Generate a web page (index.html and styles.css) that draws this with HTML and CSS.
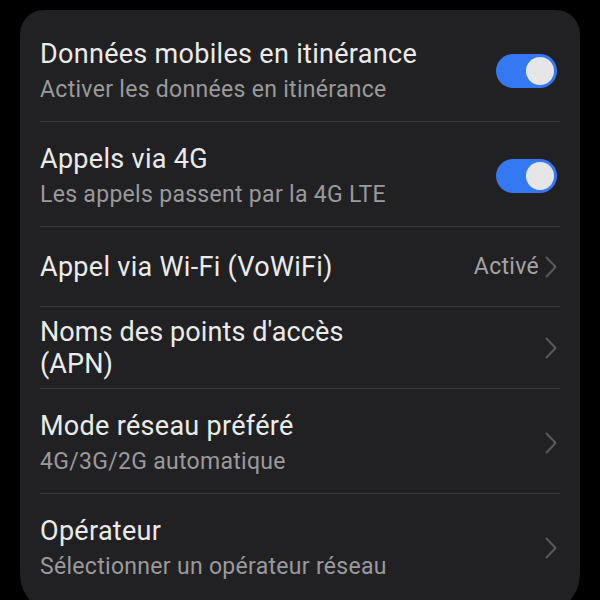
FILE: index.html
```html
<!DOCTYPE html>
<html lang="fr">
<head>
<meta charset="utf-8">
<link rel="stylesheet" href="styles.css">
</head>
<body>
<div class="card">
  <div class="row two">
    <div class="text">
      <div class="title">Données mobiles en itinérance</div>
      <div class="sub">Activer les données en itinérance</div>
    </div>
    <div class="toggle"><span class="knob"></span></div>
  </div>
  <div class="row two">
    <div class="text">
      <div class="title">Appels via 4G</div>
      <div class="sub">Les appels passent par la 4G LTE</div>
    </div>
    <div class="toggle"><span class="knob"></span></div>
  </div>
  <div class="row one">
    <div class="text">
      <div class="title">Appel via Wi-Fi (VoWiFi)</div>
    </div>
    <div class="end">
      <span class="value">Activé</span>
      <svg class="chev" width="12" height="22" viewBox="0 0 12 22"><path d="M1.5 1.5 L10.5 11 L1.5 20.5" fill="none" stroke="#5a5a5c" stroke-width="2" stroke-linecap="round" stroke-linejoin="round"/></svg>
    </div>
  </div>
  <div class="row wrap">
    <div class="text">
      <div class="title multi">Noms des points d'accès<br>(APN)</div>
    </div>
    <div class="end">
      <svg class="chev" width="12" height="22" viewBox="0 0 12 22"><path d="M1.5 1.5 L10.5 11 L1.5 20.5" fill="none" stroke="#5a5a5c" stroke-width="2" stroke-linecap="round" stroke-linejoin="round"/></svg>
    </div>
  </div>
  <div class="row two">
    <div class="text">
      <div class="title">Mode réseau préféré</div>
      <div class="sub">4G/3G/2G automatique</div>
    </div>
    <div class="end">
      <svg class="chev" width="12" height="22" viewBox="0 0 12 22"><path d="M1.5 1.5 L10.5 11 L1.5 20.5" fill="none" stroke="#5a5a5c" stroke-width="2" stroke-linecap="round" stroke-linejoin="round"/></svg>
    </div>
  </div>
  <div class="row two">
    <div class="text">
      <div class="title">Opérateur</div>
      <div class="sub">Sélectionner un opérateur réseau</div>
    </div>
    <div class="end">
      <svg class="chev" width="12" height="22" viewBox="0 0 12 22"><path d="M1.5 1.5 L10.5 11 L1.5 20.5" fill="none" stroke="#5a5a5c" stroke-width="2" stroke-linecap="round" stroke-linejoin="round"/></svg>
    </div>
  </div>
</div>
</body>
</html>
```
FILE: styles.css
```css
html, body {
  margin: 0;
  padding: 0;
  background: #000;
  height: 600px;
  overflow: hidden;
}
body {
  font-family: Roboto, "Noto Sans", "Liberation Sans", sans-serif;
}
.card {
  margin: 10px 20px 0;
  background: #212123;
  border-radius: 24px 24px 40px 40px;
  padding: 7px 20px 16px;
}
.row {
  display: flex;
  align-items: center;
  justify-content: space-between;
  border-top: 1px solid #3a3a3c;
}
.row:first-child {
  border-top: none;
}
.row.two {
  padding: 20px 0 16px;
}
.row.one {
  padding: 23px 0 22px;
}
.row.wrap {
  padding: 9px 0 8px;
}
.text {
  display: flex;
  flex-direction: column;
}
.title {
  color: #ebebeb;
  font-size: 27px;
  letter-spacing: 0.3px;
  line-height: 34px;
}
.title.multi {
  line-height: 32px;
  letter-spacing: 0.1px;
}
.sub {
  color: #9a9a9c;
  font-size: 23px;
  letter-spacing: 0.3px;
  line-height: 30px;
  margin-top: 4px;
}
.toggle {
  width: 61px;
  height: 34px;
  border-radius: 17px;
  background: #3478f4;
  display: flex;
  align-items: center;
  justify-content: flex-end;
  padding-right: 3px;
  box-sizing: border-box;
  margin-right: 3px;
}
.knob {
  width: 28px;
  height: 28px;
  border-radius: 50%;
  background: #e6e6e8;
}
.end {
  display: flex;
  align-items: center;
  gap: 6px;
  margin-right: 3px;
}
.value {
  color: #a3a3a5;
  font-size: 23px;
  letter-spacing: 0.3px;
  line-height: 30px;
}
.chev {
  display: block;
}
```
